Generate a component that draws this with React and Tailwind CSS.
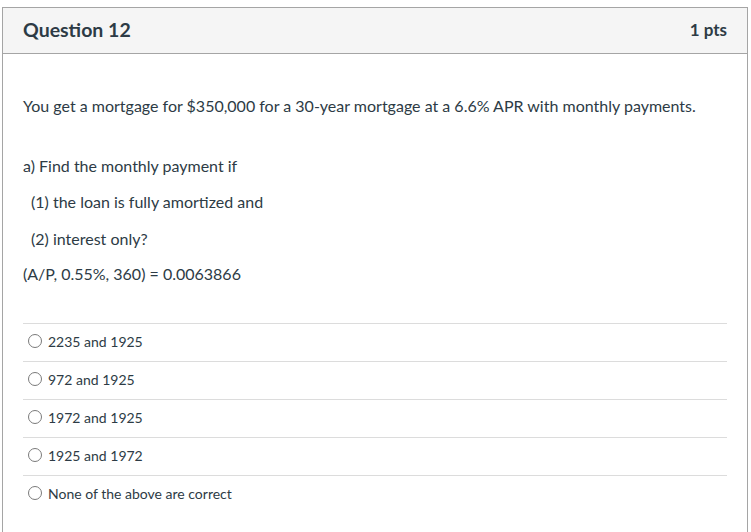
import React from 'react'

const answers = [
  '2235 and 1925',
  '972 and 1925',
  '1972 and 1925',
  '1925 and 1972',
  'None of the above are correct',
]

const Answer = ({ label }) => (
  <div className="flex items-center h-[38px] border-t border-[#dcdcdc] pl-[5px] pb-[3px]">
    <span className="w-[14px] h-[14px] rounded-full border border-[#7a7a7a] bg-white shrink-0" />
    <span className="ml-[6px] text-[14px] text-[#2d3b45]">{label}</span>
  </div>
)

export default function App() {
  return (
    <div className="w-[751px] h-[532px] overflow-hidden bg-white pt-[7px] pl-[2px]" style={{ fontFamily: 'Lato, "Open Sans", sans-serif' }}>
      <div className="w-[746px] h-[600px] border border-[#a5a5a5]">
        <div className="flex items-center justify-between h-[46px] px-5 pb-[2px] bg-[#f5f5f5] border-b border-[#a5a5a5]">
          <h2 className="text-[19.5px] font-bold text-[#2d3b45]">Question 12</h2>
          <span className="text-[17px] font-bold text-[#2d3b45]">1 pts</span>
        </div>
        <div className="px-5 text-[16px] text-[#2d3b45]">
          <p className="mt-[40px]">You get a mortgage for $350,000 for a 30-year mortgage at a 6.6% APR with monthly payments.</p>
          <p className="mt-[36px]">a) Find the monthly payment if</p>
          <p className="mt-[12px] pl-2">(1) the loan is fully amortized and</p>
          <p className="mt-[13px] pl-2">(2) interest only?</p>
          <p className="mt-[11px]">(A/P, 0.55%, 360) = 0.0063866</p>
          <div className="mt-[37px]">
            {answers.map((a) => (
              <Answer key={a} label={a} />
            ))}
          </div>
        </div>
      </div>
    </div>
  )
}
